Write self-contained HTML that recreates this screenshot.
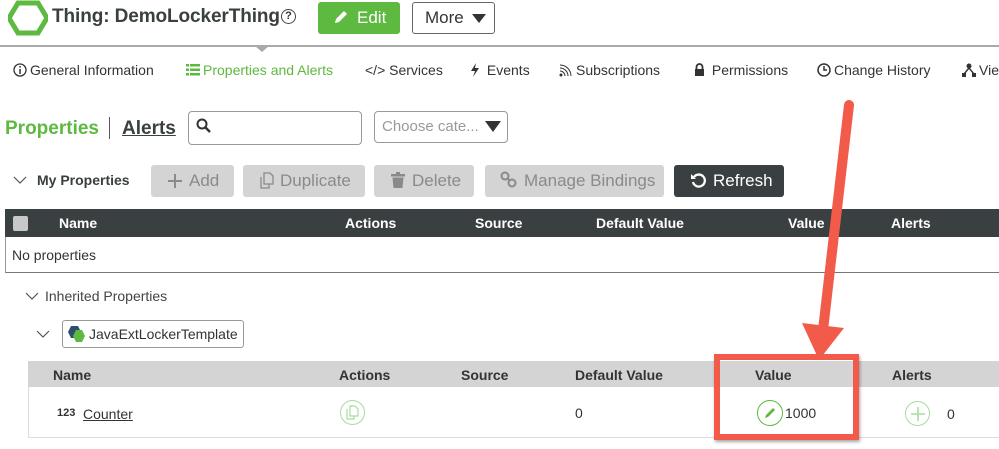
<!DOCTYPE html>
<html><head><meta charset="utf-8"><style>
*{margin:0;padding:0;box-sizing:border-box}
body{width:999px;height:449px;overflow:hidden;background:#fff;font-family:"Liberation Sans",Arial,sans-serif;color:#333;position:relative}
.a{position:absolute;white-space:nowrap}
.btn{position:absolute;height:32px;border-radius:3px;background:#d4d4d4;color:#8a8a8a;font-size:17px;line-height:32px;padding-left:14px}
.btn svg{vertical-align:-3px;margin-right:6px}
.th{position:absolute;font-weight:bold;font-size:14px}
.nav{position:absolute;top:62px;font-size:14px;white-space:nowrap}
.nav svg{vertical-align:-2px;margin-right:3px}
</style></head><body>
<svg class="a" style="left:8px;top:0" width="40" height="36" viewBox="0 0 40 36"><polygon points="10,3 30,3 39,18 30,33 10,33 1,18" fill="none" stroke="#5db940" stroke-width="5"/></svg>
<div class="a" style="left:52px;top:6px;font-size:19px;font-weight:bold;color:#3a3f41;letter-spacing:-0.1px">Thing: DemoLockerThing</div>
<div class="a" style="left:281px;top:9px;width:15px;height:15px;border:1.5px solid #444;border-radius:50%;font-size:11px;text-align:center;line-height:12px;font-weight:bold">?</div>
<div class="a" style="left:318px;top:2px;width:82px;height:32px;background:#5db940;border-radius:3px;color:#fff;font-size:17px;line-height:32px;padding-left:15px"><svg width="16" height="16" viewBox="0 0 16 16" style="vertical-align:-2px;margin-right:8px"><path d="M2 14 L3 10 L11 2 L14 5 L6 13 Z" fill="#fff"/></svg>Edit</div>
<div class="a" style="left:412px;top:2px;width:83px;height:32px;border:1.5px solid #666;border-radius:3px;font-size:17px;line-height:29px;padding-left:12px;color:#333">More <span style="display:inline-block;width:0;height:0;border-left:7px solid transparent;border-right:7px solid transparent;border-top:9px solid #333;margin-left:4px"></span></div>
<div class="a" style="left:0;top:45px;width:999px;height:1.5px;background:#aaa"></div>
<div class="a" style="left:255px;top:46px;width:0;height:0;border-left:7px solid transparent;border-right:7px solid transparent;border-top:6px solid #aaa"></div>
<div class="nav" style="left:13px"><svg width="14" height="14"><circle cx="7" cy="7" r="6" fill="none" stroke="#333" stroke-width="1.3"/><rect x="6.3" y="6" width="1.5" height="5" fill="#333"/><rect x="6.3" y="3" width="1.5" height="1.6" fill="#333"/></svg>General Information</div>
<div class="nav" style="left:186px;color:#5db940"><svg width="14" height="14"><g fill="#5db940"><rect x="0" y="1" width="3" height="2.5"/><rect x="4" y="1" width="10" height="2.5"/><rect x="0" y="5.5" width="3" height="2.5"/><rect x="4" y="5.5" width="10" height="2.5"/><rect x="0" y="10" width="3" height="2.5"/><rect x="4" y="10" width="10" height="2.5"/></g></svg>Properties and Alerts</div>
<div class="nav" style="left:365px">&lt;/&gt; Services</div>
<div class="nav" style="left:470px"><svg width="10" height="14"><path d="M6 0 L1 8 L5 8 L3 14 L9 5 L5 5 Z" fill="#333"/></svg> Events</div>
<div class="nav" style="left:559px"><svg width="14" height="14"><g fill="none" stroke="#333" stroke-width="1"><path d="M1 5 A8 8 0 0 1 9 13"/><path d="M1 2 A11 11 0 0 1 12 13"/><path d="M1 8 A5 5 0 0 1 6 13"/></g><circle cx="2" cy="12" r="1.5" fill="#333"/></svg>Subscriptions</div>
<div class="nav" style="left:694px"><svg width="11" height="14"><path d="M2.5 6 V4 A3 3 0 0 1 8.5 4 V6" fill="none" stroke="#333" stroke-width="1.8"/><rect x="1" y="6" width="9" height="7" fill="#333"/></svg> Permissions</div>
<div class="nav" style="left:817px"><svg width="14" height="14"><circle cx="7" cy="7" r="6" fill="none" stroke="#333" stroke-width="1.5"/><path d="M7 3 V7 H10" fill="none" stroke="#333" stroke-width="1.5"/></svg>Change History</div>
<div class="nav" style="left:962px"><svg width="14" height="14"><circle cx="7" cy="3" r="2.5" fill="#333"/><path d="M7 5 L2 11 M7 5 L12 11" stroke="#333" stroke-width="1.4"/><rect x="0" y="10" width="4" height="4" fill="#333"/><rect x="10" y="10" width="4" height="4" fill="#333"/></svg>Vie</div>
<div class="a" style="left:5px;top:118px;font-size:19px;font-weight:bold;color:#5db940">Properties</div>
<div class="a" style="left:109px;top:117px;width:1px;height:22px;background:#555"></div>
<div class="a" style="left:122px;top:118px;font-size:19px;font-weight:bold;color:#3a3f41;text-decoration:underline">Alerts</div>
<div class="a" style="left:188px;top:111px;width:174px;height:34px;border:1px solid #999;border-radius:4px"></div>
<svg class="a" style="left:196px;top:118px" width="16" height="16"><circle cx="6" cy="6" r="4.5" fill="none" stroke="#333" stroke-width="2"/><line x1="9" y1="9" x2="14" y2="14" stroke="#333" stroke-width="2.5"/></svg>
<div class="a" style="left:374px;top:111px;width:134px;height:32px;border:1px solid #999;border-radius:4px;font-size:15px;color:#999;line-height:30px;padding-left:7px">Choose cate... <span style="display:inline-block;width:0;height:0;border-left:8px solid transparent;border-right:8px solid transparent;border-top:11px solid #333;margin-left:2px;vertical-align:-1px"></span></div>
<svg class="a" style="left:13px;top:176px" width="14" height="8"><path d="M1 1 L7 7 L13 1" fill="none" stroke="#555" stroke-width="1.2"/></svg>
<div class="a" style="left:37px;top:172px;font-size:14px;font-weight:bold;color:#3a3f41">My Properties</div>
<div class="btn" style="left:151px;top:165px;width:83px;padding-left:16px"><svg width="16" height="16"><path d="M8 1 V15 M1 8 H15" stroke="#8a8a8a" stroke-width="2"/></svg>Add</div>
<div class="btn" style="left:243px;top:165px;width:122px;padding-left:17px"><svg width="14" height="17"><g fill="none" stroke="#8a8a8a" stroke-width="1.3"><path d="M4 1 H10 L13 4 V12 H4 Z"/><path d="M1 5 V16 H9 V12"/></g></svg>Duplicate</div>
<div class="btn" style="left:374px;top:165px;width:100px;padding-left:16px"><svg width="16" height="17"><rect x="1" y="2" width="14" height="2.5" fill="#8a8a8a"/><rect x="6" y="0" width="4" height="2" fill="#8a8a8a"/><path d="M2.5 5.5 H13.5 L12.5 16 H3.5 Z" fill="#8a8a8a"/></svg>Delete</div>
<div class="btn" style="left:485px;top:165px;width:179px;padding-left:15px"><svg width="18" height="18"><g fill="none" stroke="#8a8a8a" stroke-width="2"><circle cx="5" cy="5" r="3.5"/><circle cx="12" cy="12" r="3.5"/><path d="M7.5 7.5 L9.5 9.5"/></g></svg>Manage Bindings</div>
<div class="btn" style="left:674px;top:165px;width:110px;background:#3a4042;color:#fff;padding-left:16px"><svg width="17" height="17"><path d="M4 5 A6 6 0 1 1 3 10" fill="none" stroke="#fff" stroke-width="2.3"/><path d="M1 2 V7 H6 Z" fill="#fff"/></svg>Refresh</div>
<div class="a" style="left:5px;top:209px;width:994px;height:28px;background:#3a4042"></div>
<div class="a" style="left:13px;top:216px;width:15px;height:15px;background:#c8c8c8;border-radius:2px"></div>
<div class="th" style="left:59px;top:215px;color:#fff">Name</div>
<div class="th" style="left:345px;top:215px;color:#fff">Actions</div>
<div class="th" style="left:475px;top:215px;color:#fff">Source</div>
<div class="th" style="left:596px;top:215px;color:#fff">Default Value</div>
<div class="th" style="left:788px;top:215px;color:#fff">Value</div>
<div class="th" style="left:891px;top:215px;color:#fff">Alerts</div>
<div class="a" style="left:5px;top:237px;width:994px;height:36px;border-left:1px solid #999;border-bottom:1.5px solid #777"></div>
<div class="a" style="left:12px;top:247px;font-size:14px">No properties</div>
<svg class="a" style="left:25px;top:292px" width="14" height="8"><path d="M1 1 L7 7 L13 1" fill="none" stroke="#555" stroke-width="1.2"/></svg>
<div class="a" style="left:45px;top:288px;font-size:14px;color:#444">Inherited Properties</div>
<svg class="a" style="left:36px;top:330px" width="14" height="8"><path d="M1 1 L7 7 L13 1" fill="none" stroke="#555" stroke-width="1.2"/></svg>
<div class="a" style="left:62px;top:320px;width:182px;height:28px;border:1px solid #999;border-radius:3px"></div>
<svg class="a" style="left:67px;top:325px" width="20" height="18"><polygon points="4,1 11,1 14,7 11,13 4,13 1,7" fill="#2d4f6e"/><polygon points="9,5 15,5 18,11 15,17 9,17 6,11" fill="#5db940"/></svg>
<div class="a" style="left:89px;top:326px;font-size:14px;color:#333">JavaExtLockerTemplate</div>
<div class="a" style="left:28px;top:361px;width:971px;height:26px;background:#d4d4d4"></div>
<div class="th" style="left:53px;top:367px">Name</div>
<div class="th" style="left:339px;top:367px">Actions</div>
<div class="th" style="left:461px;top:367px">Source</div>
<div class="th" style="left:575px;top:367px">Default Value</div>
<div class="th" style="left:755px;top:367px">Value</div>
<div class="th" style="left:892px;top:367px">Alerts</div>
<div class="a" style="left:28px;top:387px;width:971px;height:51px;border-left:1px solid #ddd;border-bottom:1px solid #ddd"></div>
<div class="a" style="left:57px;top:407px;font-size:11px;font-weight:bold">123</div>
<div class="a" style="left:83px;top:406px;font-size:14px;text-decoration:underline">Counter</div>
<div class="a" style="left:340px;top:400px;width:25px;height:25px;border:1.5px solid #a8dba0;border-radius:50%"></div>
<svg class="a" style="left:346px;top:405px" width="13" height="15"><g fill="none" stroke="#a8dba0" stroke-width="1.2"><path d="M4 1 H9 L12 4 V11 H4 Z"/><path d="M1 4 V14 H8 V11"/></g></svg>
<div class="a" style="left:575px;top:405px;font-size:14px">0</div>
<div class="a" style="left:757px;top:400px;width:26px;height:26px;border:1.5px solid #5db940;border-radius:50%"></div>
<svg class="a" style="left:762px;top:405px" width="16" height="16"><path d="M3 13 L4 10 L11 3 L13 5 L6 12 Z" fill="#5db940"/></svg>
<div class="a" style="left:785px;top:405px;font-size:14px">1000</div>
<div class="a" style="left:905px;top:401px;width:25px;height:25px;border:1.5px solid #a8dba0;border-radius:50%"></div>
<svg class="a" style="left:909px;top:405px" width="18" height="18"><path d="M9 2 V16 M2 9 H16" stroke="#a8dba0" stroke-width="1.6"/></svg>
<div class="a" style="left:947px;top:406px;font-size:14px">0</div>
<div class="a" style="left:714px;top:354px;width:145px;height:86px;border:6px solid #f25a4a;box-shadow:1px 2px 3px rgba(0,0,0,.35)"></div>
<svg class="a" style="left:0;top:0" width="999" height="449"><line x1="849" y1="105" x2="823" y2="330" stroke="#f25a4a" stroke-width="10" stroke-linecap="round"/><polygon points="802,323 844,328 819,360" fill="#f25a4a"/></svg>
</body></html>
